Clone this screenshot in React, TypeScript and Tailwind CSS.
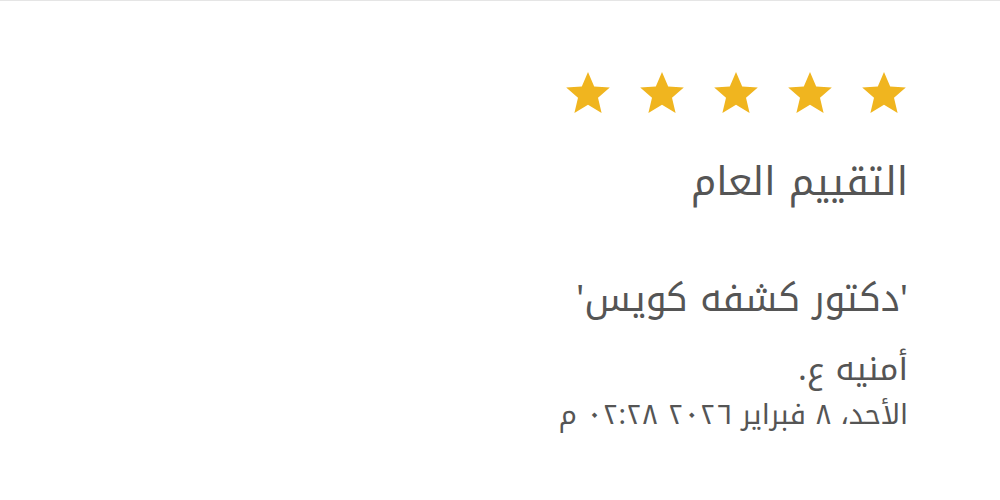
const FONT = { fontFamily: '"Noto Kufi Arabic", "Noto Sans Arabic", "Noto Sans", sans-serif' };

export default function App() {
  return (
    <div className="h-[500px] w-full border-t border-[#e5e5e5] bg-white" dir="rtl" style={FONT}>
      <div className="flex flex-col items-start pr-[92px] pt-[68px] text-[#555]">
        <div className="flex gap-[26px]">
          {[0, 1, 2, 3, 4].map((i) => (
            <svg key={i} viewBox="0 0 24 24" className="h-[48px] w-[48px]">
              <path
                d="M12 1.5l3.1 7.2 7.8.6-5.9 5.1 1.8 7.6L12 17.9 5.2 22l1.8-7.6L1.1 9.3l7.8-.6z"
                fill="#f0b51f"
              />
            </svg>
          ))}
        </div>
        <h2 className="mt-[37px] text-[39px] leading-[56px] font-normal">التقييم العام</h2>
        <p className="mt-[62px] text-[37px] leading-[54px]">'دكتور كشفه كويس'</p>
        <p className="mt-[21px] text-[33px] leading-[44px]">أمنيه ع.</p>
        <p className="mt-[6px] text-[28px] leading-[36px]">الأحد، ٨ فبراير ٢٠٢٦ ٠٢:٢٨ م</p>
      </div>
    </div>
  );
}
